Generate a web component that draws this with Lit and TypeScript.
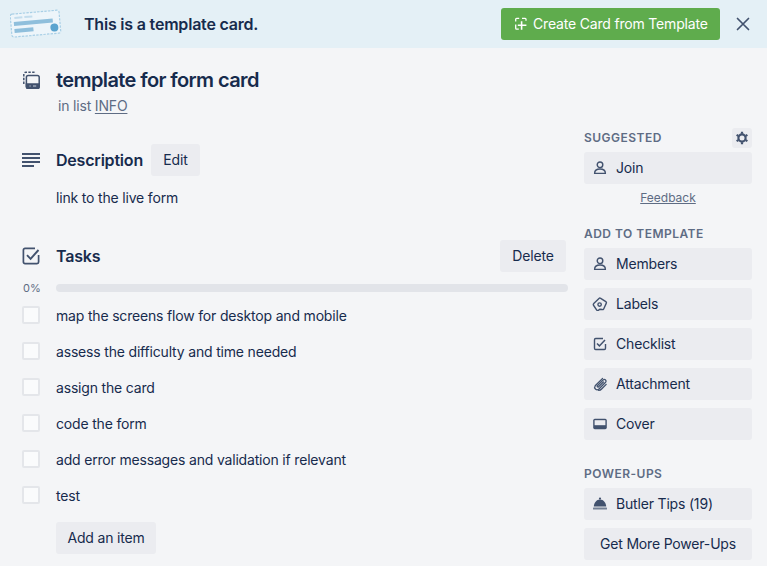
import { LitElement, html, css, svg } from "lit";
import { customElement } from "lit/decorators.js";

const person = svg`<svg class="ic" width="16" height="16" viewBox="0 0 16 16" fill="none" stroke="currentColor" stroke-width="1.4"><circle cx="8" cy="4.8" r="2.8"/><path d="M2.6 13.4c0-2.9 2.2-4.4 5.4-4.4s5.4 1.5 5.4 4.4z" stroke-linejoin="round"/></svg>`;
const tag = svg`<svg class="ic" width="16" height="16" viewBox="0 0 16 16" fill="none" stroke="currentColor" stroke-width="1.4"><path d="M2 7.2 7 2.4c.4-.4.9-.5 1.3-.2l5.5 3.4c.7.4.8 1.1.4 1.8l-2.4 5.4c-.3.7-1 1-1.7.7l-2.3-.3-.9.7a1.6 1.6 0 0 1-2.3 0L2 10a2 2 0 0 1 0-2.8z" stroke-linejoin="round"/><circle cx="7.6" cy="8.6" r="1.7"/></svg>`;
const check = svg`<svg class="ic" width="16" height="16" viewBox="0 0 16 16" fill="none" stroke="currentColor" stroke-width="1.4"><path d="M13.5 8v4.3c0 .7-.5 1.2-1.2 1.2H3.7c-.7 0-1.2-.5-1.2-1.2V3.7c0-.7.5-1.2 1.2-1.2H11"/><path d="M5 7.5l2.4 2.4 5.6-6" stroke-width="1.5"/></svg>`;
const clip = svg`<svg class="ic" width="16" height="16" viewBox="0 0 16 16" fill="none" stroke="currentColor" stroke-width="1.3" stroke-linecap="round"><path d="M10.6 2.4 3.2 9.8a2.5 2.5 0 0 0 3.5 3.5l6.9-7a1.7 1.7 0 0 0-2.4-2.4L5.3 9.9a.8.8 0 0 0 1.1 1.1l5-5"/><path d="M14.2 8.4 9.6 13a3.6 3.6 0 0 1-3 1.4"/></svg>`;
const cover = svg`<svg class="ic" width="16" height="16" viewBox="0 0 16 16"><rect x="1.2" y="2.8" width="13.6" height="10.4" rx="1.6" fill="currentColor"/><rect x="2.6" y="4.2" width="10.8" height="5" fill="#ebecf0"/></svg>`;
const bell = svg`<svg class="ic" width="16" height="16" viewBox="0 0 16 16" fill="currentColor"><circle cx="8" cy="2.6" r="1.1"/><path d="M1.8 10.6C1.9 7 4.5 3.6 8 3.6s6.1 3.4 6.2 7z"/><rect x="1" y="11.6" width="14" height="1.8" rx=".5" opacity=".7"/></svg>`;

@customElement("app-root")
export class AppRoot extends LitElement {
  static styles = css`
    :host { display: block; width: 767px; height: 566px; overflow: hidden; background: #f4f5f7; color: #172b4d; font: 400 14px/20px Inter, "Noto Sans", sans-serif; letter-spacing: -0.18px; }
    * { box-sizing: border-box; }
    .banner { height: 48px; background: #e4f0f6; display: flex; align-items: center; padding: 0 12px 0 10px; }
    .art { width: 54px; height: 30px; flex: none; margin-right: 20px; }
    .banner-text { flex: 1; font-size: 16px; font-weight: 600; letter-spacing: -0.2px; }
    .create { width: 219px; height: 32px; background: #5fac4d; color: #fff; border-radius: 3px; display: flex; align-items: center; padding-left: 14px; gap: 6px; }
    .close { width: 24px; height: 24px; margin-left: 11px; color: #42526e; display: flex; align-items: center; justify-content: center; }
    .layout { display: grid; grid-template-columns: 568px 168px; column-gap: 16px; }
    .main { padding-top: 20px; min-width: 0; }
    .row { display: grid; grid-template-columns: 56px 1fr; }
    .lead { display: flex; justify-content: flex-start; padding: 3px 0 0 22px; color: #42526e; }
    .title { font-size: 20px; font-weight: 600; line-height: 24px; letter-spacing: -0.6px; }
    .inlist { color: #5e6c84; margin: 4px 0 0 2px; line-height: 20px; }
    .inlist u { text-underline-offset: 2px; }
    .head { display: flex; align-items: center; height: 32px; }
    .h3 { font-size: 16px; font-weight: 600; line-height: 20px; letter-spacing: -0.2px; }
    .btn { background: #ebecf0; border-radius: 3px; height: 32px; display: flex; align-items: center; justify-content: center; color: #172b4d; }
    .lead.mid { align-items: center; height: 32px; padding-top: 0; }
    .desc-sec { margin-top: 28px; }
    .desc-sec .btn { margin-left: 8px; width: 49px; }
    .desc { margin-top: 12px; }
    .tasks { margin-top: 32px; }
    .tasks .row:first-child .btn { margin-left: auto; margin-right: 2px; width: 66px; }
    .tasks .h3 { flex: 1; }
    .prog { display: grid; grid-template-columns: 56px 1fr; align-items: center; height: 16px; margin-top: 8px; }
    .pct { font-size: 11px; color: #5e6c84; padding-left: 23px; line-height: 16px; letter-spacing: 0; }
    .bar { height: 8px; border-radius: 4px; background: #e2e4e9; }
    .item { display: grid; grid-template-columns: 56px 1fr; height: 36px; align-items: center; }
    .items { margin-top: 2px; }
    .box { width: 18px; height: 18px; margin: 0 0 2px 22px; border-radius: 2px; background: #fafbfc; border: 2px solid #e4e6ea; }
    .add { margin: 8px 0 0 56px; width: 100px; }
    .side { padding-top: 80px; min-width: 0; }
    .side-head { display: flex; align-items: center; justify-content: space-between; height: 20px; }
    .label { font-size: 12px; font-weight: 600; color: #5e6c84; letter-spacing: 0.04em; line-height: 20px; }
    .gear { width: 20px; height: 20px; border-radius: 3px; background: #ebecf0; color: #42526e; display: flex; align-items: center; justify-content: center; }
    .act { height: 32px; background: #ebecf0; border-radius: 3px; display: flex; align-items: center; padding-left: 8px; gap: 8px; margin-top: 8px; }
    .first { margin-top: 4px; }
    .ic { flex: none; color: #42526e; }
    .feedback { text-align: center; font-size: 12px; color: #5e6c84; text-decoration: underline; margin-top: 4px; height: 20px; letter-spacing: 0; }
    .sec2 { margin-top: 16px; }
    .sec3 { margin-top: 24px; }
    .center { justify-content: center; padding: 0; }
  `;

  render() {
    const items = ["map the screens flow for desktop and mobile", "assess the difficulty and time needed", "assign the card", "code the form", "add error messages and validation if relevant", "test"];
    return html`
      <div class="banner">
        <svg class="art" viewBox="0 0 54 30">
          <g transform="rotate(-5 27 15)">
            <rect x="1" y="3" width="49" height="23" rx="2" fill="#edf5fa" stroke="#a8cfe6" stroke-width="1.2" stroke-dasharray="2.4 1.2"/>
            <rect x="5" y="6" width="8" height="2" fill="#c3dded"/><rect x="15" y="6" width="8" height="2" fill="#c3dded"/>
            <rect x="4" y="11" width="39" height="4" fill="#8fbfdc"/>
            <rect x="4" y="18" width="19" height="4" fill="#8fbfdc"/>
            <circle cx="44" cy="20" r="4" fill="#5ba4cf"/>
          </g>
        </svg>
        <div class="banner-text">This is a template card.</div>
        <div class="create">
          <svg width="12" height="14" viewBox="0 0 12 14" fill="none" stroke="#fff" stroke-width="1.3"><path d="M.7 4.5V2.2c0-.5.4-.9.9-.9h2.6M7 1.3h3.2c.4 0 .8.4.8.9v1.6M.7 7.5v3.8c0 .5.4.9.9.9h2.2"/><path d="M6.6 4.2v8.6M2.8 8.3h8.6" stroke-width="1.6"/></svg>
          <span>Create Card from Template</span>
        </div>
        <div class="close"><svg width="14" height="14" viewBox="0 0 14 14" stroke="#42526e" stroke-width="1.7" stroke-linecap="round"><path d="M1.5 1.5l11 11M12.5 1.5l-11 11"/></svg></div>
      </div>
      <div class="layout">
        <div class="main">
          <div class="row">
            <div class="lead">
              <svg width="18" height="18" viewBox="0 0 18 18" fill="none" stroke="#42526e" stroke-width="1.5"><path d="M1.8 13V3.2A2 2 0 0 1 3.8 1.2H14" stroke-dasharray="2.4 1.4"/><rect x="4.4" y="4.4" width="12.8" height="12.8" rx="1.8"/><path d="M4.4 13h12.8v2.4a1.8 1.8 0 0 1-1.8 1.8H6.2a1.8 1.8 0 0 1-1.8-1.8z" fill="#42526e"/><path d="M7.5 15h1.2M11 15h3.2" stroke="#c9d1dd" stroke-width="1"/></svg>
            </div>
            <div>
              <div class="title">template for form card</div>
              <div class="inlist">in list <u>INFO</u></div>
            </div>
          </div>
          <div class="row desc-sec">
            <div class="lead mid"><svg width="18" height="14" viewBox="0 0 18 14" fill="#42526e"><rect y="0" width="18" height="2"/><rect y="4" width="18" height="2"/><rect y="8" width="18" height="2"/><rect y="12" width="12" height="2"/></svg></div>
            <div>
              <div class="head"><span class="h3">Description</span><span class="btn">Edit</span></div>
              <div class="desc">link to the live form</div>
            </div>
          </div>
          <div class="tasks">
            <div class="row">
              <div class="lead mid"><svg width="18" height="18" viewBox="0 0 18 18" fill="none" stroke="#42526e" stroke-width="1.7"><path d="M16.6 8v7a1.6 1.6 0 0 1-1.6 1.6H3A1.6 1.6 0 0 1 1.4 15V3A1.6 1.6 0 0 1 3 1.4h10"/><path d="M5 8.2l3.6 3.6L16.5 3" stroke-width="1.9"/></svg></div>
              <div class="head"><span class="h3">Tasks</span><span class="btn">Delete</span></div>
            </div>
            <div class="prog"><span class="pct">0%</span><div class="bar"></div></div>
            <div class="items">
              ${items.map((t) => html`<div class="item"><div class="box"></div><div>${t}</div></div>`)}
            </div>
            <div class="btn add">Add an item</div>
          </div>
        </div>
        <div class="side">
          <div class="side-head"><span class="label">SUGGESTED</span>
            <span class="gear"><svg width="14" height="14" viewBox="0 0 14 14" fill="none"><circle cx="7" cy="7" r="3.6" stroke="#42526e" stroke-width="2.2"/><path d="M7 .8v2M7 11.2v2M1.6 3.9l1.7 1M10.7 9.1l1.7 1M1.6 10.1l1.7-1M10.7 4.9l1.7-1" stroke="#42526e" stroke-width="2.2"/></svg></span>
          </div>
          <div class="act first">${person}<span>Join</span></div>
          <div class="feedback">Feedback</div>
          <div class="label sec2">ADD TO TEMPLATE</div>
          <div class="act first">${person}<span>Members</span></div>
          <div class="act">${tag}<span>Labels</span></div>
          <div class="act">${check}<span>Checklist</span></div>
          <div class="act">${clip}<span>Attachment</span></div>
          <div class="act">${cover}<span>Cover</span></div>
          <div class="label sec3">POWER-UPS</div>
          <div class="act first">${bell}<span>Butler Tips (19)</span></div>
          <div class="act center">Get More Power-Ups</div>
        </div>
      </div>
    `;
  }
}
